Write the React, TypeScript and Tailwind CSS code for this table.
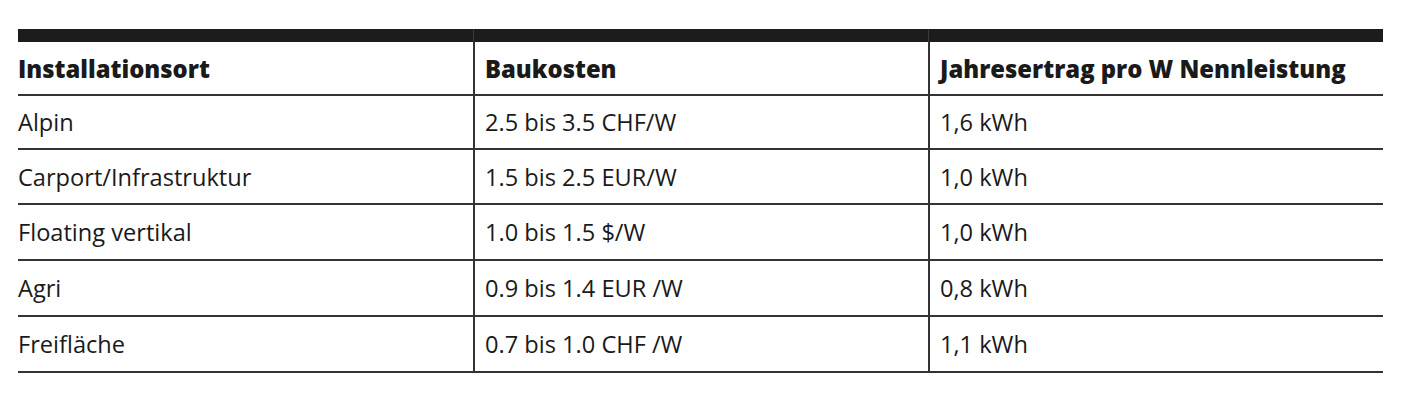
const rows = [
  ['Alpin', '2.5 bis 3.5 CHF/W', '1,6 kWh'],
  ['Carport/Infrastruktur', '1.5 bis 2.5 EUR/W', '1,0 kWh'],
  ['Floating vertikal', '1.0 bis 1.5 $/W', '1,0 kWh'],
  ['Agri', '0.9 bis 1.4 EUR /W', '0,8 kWh'],
  ['Freifläche', '0.7 bis 1.0 CHF /W', '1,1 kWh'],
];

const headers = ['Installationsort', 'Baukosten', 'Jahresertrag pro W Nennleistung'];

// row heights follow the source (border included)
const rowHeights = ['h-[54px]', 'h-[55px]', 'h-[56px]', 'h-[56px]', 'h-[56px]'];

export default function App() {
  return (
    <div className="min-h-[400px] bg-white pt-[29px] pl-[18px] font-['Open_Sans',_'Liberation_Sans',_sans-serif] text-[#1a1a1a]">
      <div className="w-[1365px]">
        {/* top bar */}
        <div className="grid h-[13px] grid-cols-3 bg-[#1c1c1c]">
          <div />
          <div className="border-l border-[#3a3a3a]" />
          <div className="border-l border-[#3a3a3a]" />
        </div>

        <div className="grid h-[54px] grid-cols-3 border-b-2 border-[#333]">
          {headers.map((h, i) => (
            <div
              key={h}
              className={`flex items-center pt-[4px] text-[23.8px] font-extrabold leading-none ${i > 0 ? 'border-l-2 border-[#333] pl-[10px]' : ''}`}
            >
              {h}
            </div>
          ))}
        </div>

        {rows.map((r, ri) => (
          <div key={r[0]} className={`grid grid-cols-3 border-b-2 border-[#333] ${rowHeights[ri]}`}>
            {r.map((c, i) => (
              <div
                key={i}
                className={`flex items-center pt-[2px] text-[23.6px] leading-none ${i > 0 ? 'border-l-2 border-[#333] pl-[10px]' : ''}`}
              >
                {c}
              </div>
            ))}
          </div>
        ))}
      </div>
    </div>
  );
}
